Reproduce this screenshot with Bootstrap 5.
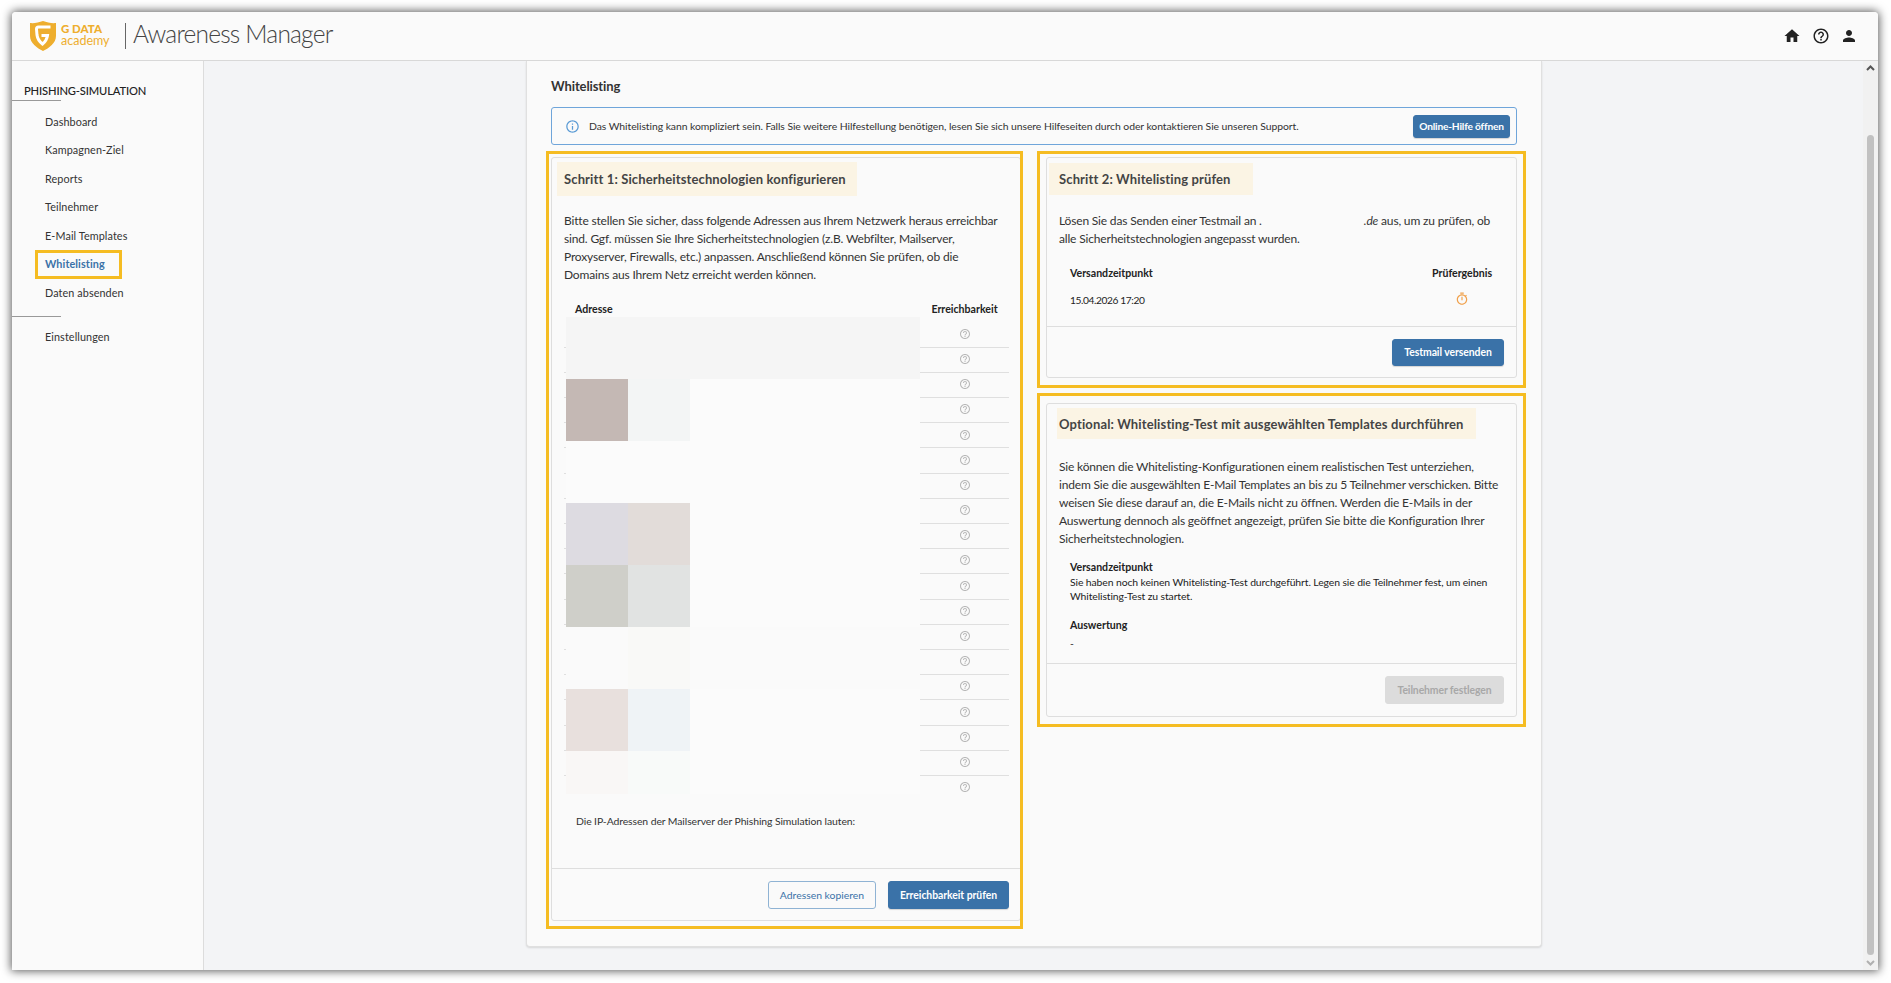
<!DOCTYPE html>
<html lang="de">
<head>
<meta charset="utf-8">
<title>Awareness Manager</title>
<link rel="stylesheet" href="https://cdn.jsdelivr.net/npm/bootstrap@5.3.0/dist/css/bootstrap.min.css">
<style>
html,body{height:983px;overflow:hidden;background:#fff}
body{font-family:"Lato","Liberation Sans",sans-serif;color:#333;font-size:11px;padding:12px 13px 13px 12px}
.win{width:1866px;height:958px;display:flex;flex-direction:column;box-shadow:0 0 10px 1px rgba(0,0,0,.65);border-radius:4px 4px 0 0;overflow:hidden;background:#fafafa}
.topbar{height:49px;flex:none;background:#fafafa;border-bottom:1px solid #d8d8d8;padding:0}
.logo-g{margin-left:18px;width:26px;height:30px;display:block;flex:none}
.logo-t{margin-left:5px;margin-bottom:3px;width:50px;line-height:1;color:#eeae2e}
.logo-t b{display:block;font-size:11.5px;font-weight:900;line-height:11px;white-space:nowrap}
.logo-t span{display:block;font-size:12.5px;line-height:11px;margin-top:1px}
.app-title{margin-left:14px;padding-left:7px;border-left:1px solid #666;font-size:24.5px;font-weight:300;color:#444;line-height:22px;height:26px;white-space:nowrap;letter-spacing:-.8px}
.top-ic{width:18px;height:18px;fill:#222;display:block}
.top-icons{margin-left:auto;gap:10.5px;margin-right:20px}
.body-row{flex:1;min-height:0;background:#f3f4f6}
.side{width:192px;flex:none;background:#fafafa;border-right:1px solid #dcdcdc;position:relative}
.side-h{margin:20.5px 0 0;padding:0 0 1.5px 12px;font-size:11.2px;font-weight:500;line-height:17px;color:#222;letter-spacing:-.15px;white-space:nowrap}
.side-rule{width:49px;height:1px;background:#999;display:block}
.side-list{margin-top:6.5px}
.side-list a{display:block;padding:0 0 0 33px;height:28.6px;line-height:28.6px;color:#333;text-decoration:none;font-size:10.8px;letter-spacing:.1px;white-space:nowrap}
.side-list a.on{color:#3a72a8;font-weight:700;position:relative}
.side-list a.on::after{content:"";position:absolute;left:23px;top:0;width:87px;height:29px;border:3px solid #f5bc22}
.side-rule.lo{margin-top:8.5px}
.side-list.lo{margin-top:6px}
.main-area{flex:1;min-width:0}
.sheet{margin-left:322px;width:1016px;height:886px;background:#fafafa;border:1px solid #e0e0e0;border-top:0;border-radius:0 0 4px 4px;box-shadow:0 1px 2px rgba(0,0,0,.12);padding:15px 24px 0}
.sheet-h{font-size:13px;font-weight:700;line-height:20px;color:#333;margin:0 0 11px;letter-spacing:-.1px}
.info-box{height:38px;width:966px;border:1px solid #6fa5da;border-radius:3px;padding:0 6px 0 12.5px;margin-bottom:12px;font-size:10.4px;letter-spacing:-.06px;color:#333}
.info-box span{padding-top:2px}
.info-box svg{width:15px;height:15px;fill:#5b9bd5;margin-right:9.5px;flex:none}
.pbtn{background:#3a72a8;border:1px solid #3a72a8;color:#fff;font-size:10.4px;font-weight:700;letter-spacing:-.05px;border-radius:3px;padding:1px 0 0;display:flex;align-items:center;justify-content:center;box-shadow:0 1px 1px rgba(0,0,0,.15);white-space:nowrap}
.pbtn:hover{background:#3a72a8;color:#fff}
.oh-btn{width:97px;height:23px;margin-left:auto;font-size:10.2px;letter-spacing:-.2px}
.cols{display:flex;gap:25px;align-items:flex-start}
.panel{background:#fafafa;border:1px solid #dedede;border-radius:3px;position:relative;display:flex;flex-direction:column}
.panel::after{content:"";position:absolute;border:3px solid #f5bc22;pointer-events:none}
.p1{width:470px;height:764px}
.p1::after{inset:-7px -3px -9px -6px}
.p2{width:471px;height:221px}
.p2::after{inset:-7px -10px -11px -10px}
.p3{width:471px;height:314px}
.p3::after{inset:-11px -10px -11px -10px}
.right-col{width:471px;display:flex;flex-direction:column;gap:25px}
.ph{background:#fbf4e4;font-size:13px;font-weight:700;color:#444;letter-spacing:.13px;white-space:nowrap;display:flex;align-items:center;flex:none;padding-top:2px}
.p1 .ph{margin:4px 0 0 5px;width:300px;height:34px;padding-left:7px}
.p2 .ph{margin:5px 0 0 2px;width:204px;height:32px;padding-left:10px}
.p3 .ph{margin:4px 0 0 10px;width:419px;height:31px;padding-left:2px}
.ptext{font-size:12px;line-height:18px;color:#333;margin:0;white-space:nowrap;letter-spacing:-.17px;flex:none}
.p1 .ptext{margin:16px 0 0 12px}
.p2 .ptext{margin:17px 0 0 12px}
.p3 .ptext{margin:19px 0 0 12px}
.redact{display:inline-block;width:102px}
.addr-wrap{margin:12px 12px 0;position:relative;width:445px;flex:none}
.addr{width:445px;margin:0;border-collapse:collapse;font-size:10.6px}
.addr th{height:26px;font-weight:700;color:#222;padding:2px 0 0 11px;vertical-align:middle;border:0;background:transparent}
.addr th+th{width:89px;padding:2px 0 0;text-align:center;white-space:nowrap}
.addr td{height:25.2px;padding:0 0 2px;border:0;border-top:1px solid #dfdfdf;text-align:center;vertical-align:middle;background:transparent;line-height:1}
.addr tbody tr:first-child td{border-top:0}
.q-ic{width:12px;height:12px;fill:#b8b8b8;display:inline-block;vertical-align:middle}
.blur-cover{position:absolute;left:2px;top:21px;width:354px;height:477px;background:#fbfbfb;display:grid;grid-template-columns:62px 62px 1fr;grid-auto-rows:62px;overflow:hidden}
.blur-cover i{display:block}
.b-wide{grid-column:1/4;background:#f5f5f5}
.c1{background:#c4b8b4}.c2{background:#f3f5f5}.c0{background:#fbfbfb}
.c3{background:#dddbe1}.c4{background:#e2dcd9}.c5{background:#cfcfc9}.c6{background:#e1e3e2}
.c7{background:#fafafa}.c8{background:#f9f9f7}.c9{background:#e8e0dd}.c10{background:#eff3f6}.c11{background:#f9f7f6}.c12{background:#f8faf9}
.ip-note{font-size:10.4px;letter-spacing:-.08px;line-height:16px;margin:12px 0 0 24px;color:#333;white-space:nowrap;flex:none}
.pfoot{margin-top:auto;height:52px;flex:none;border-top:1px solid #dedede;padding:12px 12px 0 0;display:flex;justify-content:flex-end;gap:12px;align-items:flex-start}
.p1 .pfoot{padding-right:11px}
.p2 .pfoot{height:51px}
.p3 .pfoot{height:53px}
.obtn{width:108px;height:28px;background:transparent;border:1px solid #8fb3d4;color:#3a72a8;font-size:10.4px;border-radius:3px;padding:1px 0 0;white-space:nowrap}
.btn-mail{width:112px;height:27px}
.btn-reach{width:121px;height:28px}
.btn-off,.btn-off:disabled{width:119px;height:28px;background:#dcdcdc;border:1px solid #dcdcdc;color:#a8a8a8;font-size:10.4px;font-weight:700;letter-spacing:-.1px;border-radius:3px;opacity:1;padding:1px 0 0;white-space:nowrap}
.res-head{font-size:10.6px;font-weight:700;color:#222}
.res-grid{margin:18px 0 0 23px;width:421px;flex:none}
.res-grid .vt{font-size:10.2px;letter-spacing:-.4px;color:#222;margin-top:11px}
.t-ic{width:14px;height:14px;fill:#f0a04a;display:block;margin:10px auto 0}
.res-col{width:59px}
.p3-res{margin:11.5px 0 0 23px;width:430px;font-size:10.4px;letter-spacing:-.1px;line-height:14.5px;color:#222;white-space:nowrap;flex:none}
.p3-res .res-head{line-height:15px;letter-spacing:0}
.p3-res .gap-top{margin-top:14px}
.p3-res .dash{margin-top:3px}
.scrolly{width:15px;flex:none;background:#f1f1f1;position:relative;display:flex;flex-direction:column;align-items:center}
.scrolly svg{width:9px;height:6px;display:block;fill:none;stroke-width:2}
.up{stroke:#555;margin-top:4px}
.thumb{width:7px;height:820px;margin-top:64px;background:#c1c1c1;border-radius:4px}
.dn{stroke:#b0b0b0;margin-top:5px}
</style>
</head>
<body>
<div class="win">
  <nav class="navbar topbar d-flex align-items-center flex-nowrap">
    <svg class="logo-g" viewBox="0 0 26 30"><path fill="#eeae2e" d="M0 2C4 2.500 9 1.500 13 0c4 1.500 9 2.500 13 2v13c0 7-7 12-13 15C7 27 0 22 0 15z"/><path fill="none" stroke="#fff" stroke-width="3" d="M20.500 6H8.500C7 6 6.500 7 6.500 8l.5 6c.5 4 3 7 5.500 9 2.500-2 4.500-5 5-8.500h-6"/></svg>
    <div class="logo-t"><b>G DATA</b><span>academy</span></div>
    <div class="app-title">Awareness Manager</div>
    <div class="top-icons d-flex align-items-center">
      <svg class="top-ic" viewBox="0 0 24 24"><path d="M10 20v-6h4v6h5v-8h3L12 3 2 12h3v8z"/></svg>
      <svg class="top-ic" viewBox="0 0 24 24"><path d="M11 18h2v-2h-2v2zm1-16C6.480 2 2 6.480 2 12s4.480 10 10 10 10-4.480 10-10S17.520 2 12 2zm0 18c-4.410 0-8-3.590-8-8s3.590-8 8-8 8 3.590 8 8-3.590 8-8 8zm0-14c-2.210 0-4 1.790-4 4h2c0-1.100.9-2 2-2s2 .9 2 2c0 2-3 1.750-3 5h2c0-2.250 3-2.500 3-5 0-2.210-1.790-4-4-4z"/></svg>
      <svg class="top-ic" viewBox="0 0 24 24"><path d="M12 12c2.210 0 4-1.790 4-4s-1.790-4-4-4-4 1.790-4 4 1.790 4 4 4zm0 2c-2.670 0-8 1.340-8 4v2h16v-2c0-2.660-5.330-4-8-4z"/></svg>
    </div>
  </nav>
  <div class="body-row d-flex">
    <aside class="side">
      <div class="side-h">PHISHING-SIMULATION</div>
      <span class="side-rule"></span>
      <div class="side-list">
        <a href="#">Dashboard</a>
        <a href="#">Kampagnen-Ziel</a>
        <a href="#">Reports</a>
        <a href="#">Teilnehmer</a>
        <a href="#">E-Mail Templates</a>
        <a href="#" class="on">Whitelisting</a>
        <a href="#">Daten absenden</a>
      </div>
      <span class="side-rule lo"></span>
      <div class="side-list lo"><a href="#">Einstellungen</a></div>
    </aside>
    <main class="main-area">
      <section class="sheet">
        <h1 class="sheet-h">Whitelisting</h1>
        <div class="info-box d-flex align-items-center">
          <svg viewBox="0 0 24 24"><path d="M11 7h2v2h-2zm0 4h2v6h-2zm1-9C6.480 2 2 6.480 2 12s4.480 10 10 10 10-4.480 10-10S17.520 2 12 2zm0 18c-4.410 0-8-3.590-8-8s3.590-8 8-8 8 3.590 8 8-3.590 8-8 8z"/></svg>
          <span class="text-nowrap">Das Whitelisting kann kompliziert sein. Falls Sie weitere Hilfestellung benötigen, lesen Sie sich unsere Hilfeseiten durch oder kontaktieren Sie unseren Support.</span>
          <button type="button" class="btn pbtn oh-btn">Online-Hilfe öffnen</button>
        </div>
        <div class="cols">
          <div class="panel p1">
            <div class="ph">Schritt 1: Sicherheitstechnologien konfigurieren</div>
            <p class="ptext">Bitte stellen Sie sicher, dass folgende Adressen aus Ihrem Netzwerk heraus erreichbar<br>sind. Ggf. müssen Sie Ihre Sicherheitstechnologien (z.B. Webfilter, Mailserver,<br>Proxyserver, Firewalls, etc.) anpassen. Anschließend können Sie prüfen, ob die<br>Domains aus Ihrem Netz erreicht werden können.</p>
            <div class="addr-wrap">
              <table class="addr" id="addr">
                <thead><tr><th>Adresse</th><th>Erreichbarkeit</th></tr></thead>
                <tbody>
                  <tr><td></td><td><svg class="q-ic" viewBox="0 0 24 24"><path d="M11 18h2v-2h-2v2zm1-16C6.480 2 2 6.480 2 12s4.480 10 10 10 10-4.480 10-10S17.520 2 12 2zm0 18c-4.410 0-8-3.590-8-8s3.590-8 8-8 8 3.590 8 8-3.590 8-8 8zm0-14c-2.210 0-4 1.790-4 4h2c0-1.100.9-2 2-2s2 .9 2 2c0 2-3 1.750-3 5h2c0-2.250 3-2.500 3-5 0-2.210-1.790-4-4-4z"/></svg></td></tr>
                </tbody>
              </table>
              <div class="blur-cover">
                <i class="b-wide"></i>
                <i class="c1"></i><i class="c2"></i><i class="c0"></i>
                <i class="c0"></i><i class="c0"></i><i class="c0"></i>
                <i class="c3"></i><i class="c4"></i><i class="c0"></i>
                <i class="c5"></i><i class="c6"></i><i class="c0"></i>
                <i class="c7"></i><i class="c8"></i><i class="c7"></i>
                <i class="c9"></i><i class="c10"></i><i class="c0"></i>
                <i class="c11"></i><i class="c12"></i><i class="c0"></i>
              </div>
            </div>
            <p class="ip-note">Die IP-Adressen der Mailserver der Phishing Simulation lauten:</p>
            <div class="pfoot">
              <button type="button" class="btn obtn">Adressen kopieren</button>
              <button type="button" class="btn pbtn btn-reach">Erreichbarkeit prüfen</button>
            </div>
          </div>
          <div class="right-col">
            <div class="panel p2">
              <div class="ph">Schritt 2: Whitelisting prüfen</div>
              <p class="ptext">Lösen Sie das Senden einer Testmail an .<span class="redact"></span><em>.de</em> aus, um zu prüfen, ob<br>alle Sicherheitstechnologien angepasst wurden.</p>
              <div class="res-grid d-flex justify-content-between">
                <div><div class="res-head">Versandzeitpunkt</div><div class="vt">15.04.2026 17:20</div></div>
                <div class="res-col text-nowrap"><div class="res-head">Prüfergebnis</div><svg class="t-ic" viewBox="0 0 24 24"><path d="M15 1H9v2h6V1zm-4 13h2V8h-2v6zm8.030-6.610l1.420-1.420c-.43-.51-.9-.99-1.410-1.410l-1.420 1.420C16.070 4.740 14.120 4 12 4c-4.970 0-9 4.030-9 9s4.020 9 9 9 9-4.030 9-9c0-2.120-.74-4.070-1.970-5.610zM12 20c-3.870 0-7-3.130-7-7s3.130-7 7-7 7 3.130 7 7-3.130 7-7 7z"/></svg></div>
              </div>
              <div class="pfoot">
                <button type="button" class="btn pbtn btn-mail">Testmail versenden</button>
              </div>
            </div>
            <div class="panel p3">
              <div class="ph">Optional: Whitelisting-Test mit ausgewählten Templates durchführen</div>
              <p class="ptext">Sie können die Whitelisting-Konfigurationen einem realistischen Test unterziehen,<br>indem Sie die ausgewählten E-Mail Templates an bis zu 5 Teilnehmer verschicken. Bitte<br>weisen Sie diese darauf an, die E-Mails nicht zu öffnen. Werden die E-Mails in der<br>Auswertung dennoch als geöffnet angezeigt, prüfen Sie bitte die Konfiguration Ihrer<br>Sicherheitstechnologien.</p>
              <div class="p3-res">
                <div class="res-head">Versandzeitpunkt</div>
                <div>Sie haben noch keinen Whitelisting-Test durchgeführt. Legen sie die Teilnehmer fest, um einen<br>Whitelisting-Test zu startet.</div>
                <div class="res-head gap-top">Auswertung</div>
                <div class="dash">-</div>
              </div>
              <div class="pfoot">
                <button type="button" class="btn btn-off" disabled>Teilnehmer festlegen</button>
              </div>
            </div>
          </div>
        </div>
      </section>
    </main>
    <div class="scrolly">
      <svg class="up" viewBox="0 0 9 6"><polyline points="1,5 4.500,1.500 8,5"/></svg>
      <div class="thumb"></div>
      <svg class="dn" viewBox="0 0 9 6"><polyline points="1,1 4.500,4.500 8,1"/></svg>
    </div>
  </div>
</div>
<script>
var tb=document.querySelector('#addr tbody'),r=tb.querySelector('tr');
for(var i=0;i<18;i++){tb.appendChild(r.cloneNode(true));}
</script>
<script src="https://cdn.jsdelivr.net/npm/bootstrap@5.3.0/dist/js/bootstrap.bundle.min.js"></script>
</body>
</html>
